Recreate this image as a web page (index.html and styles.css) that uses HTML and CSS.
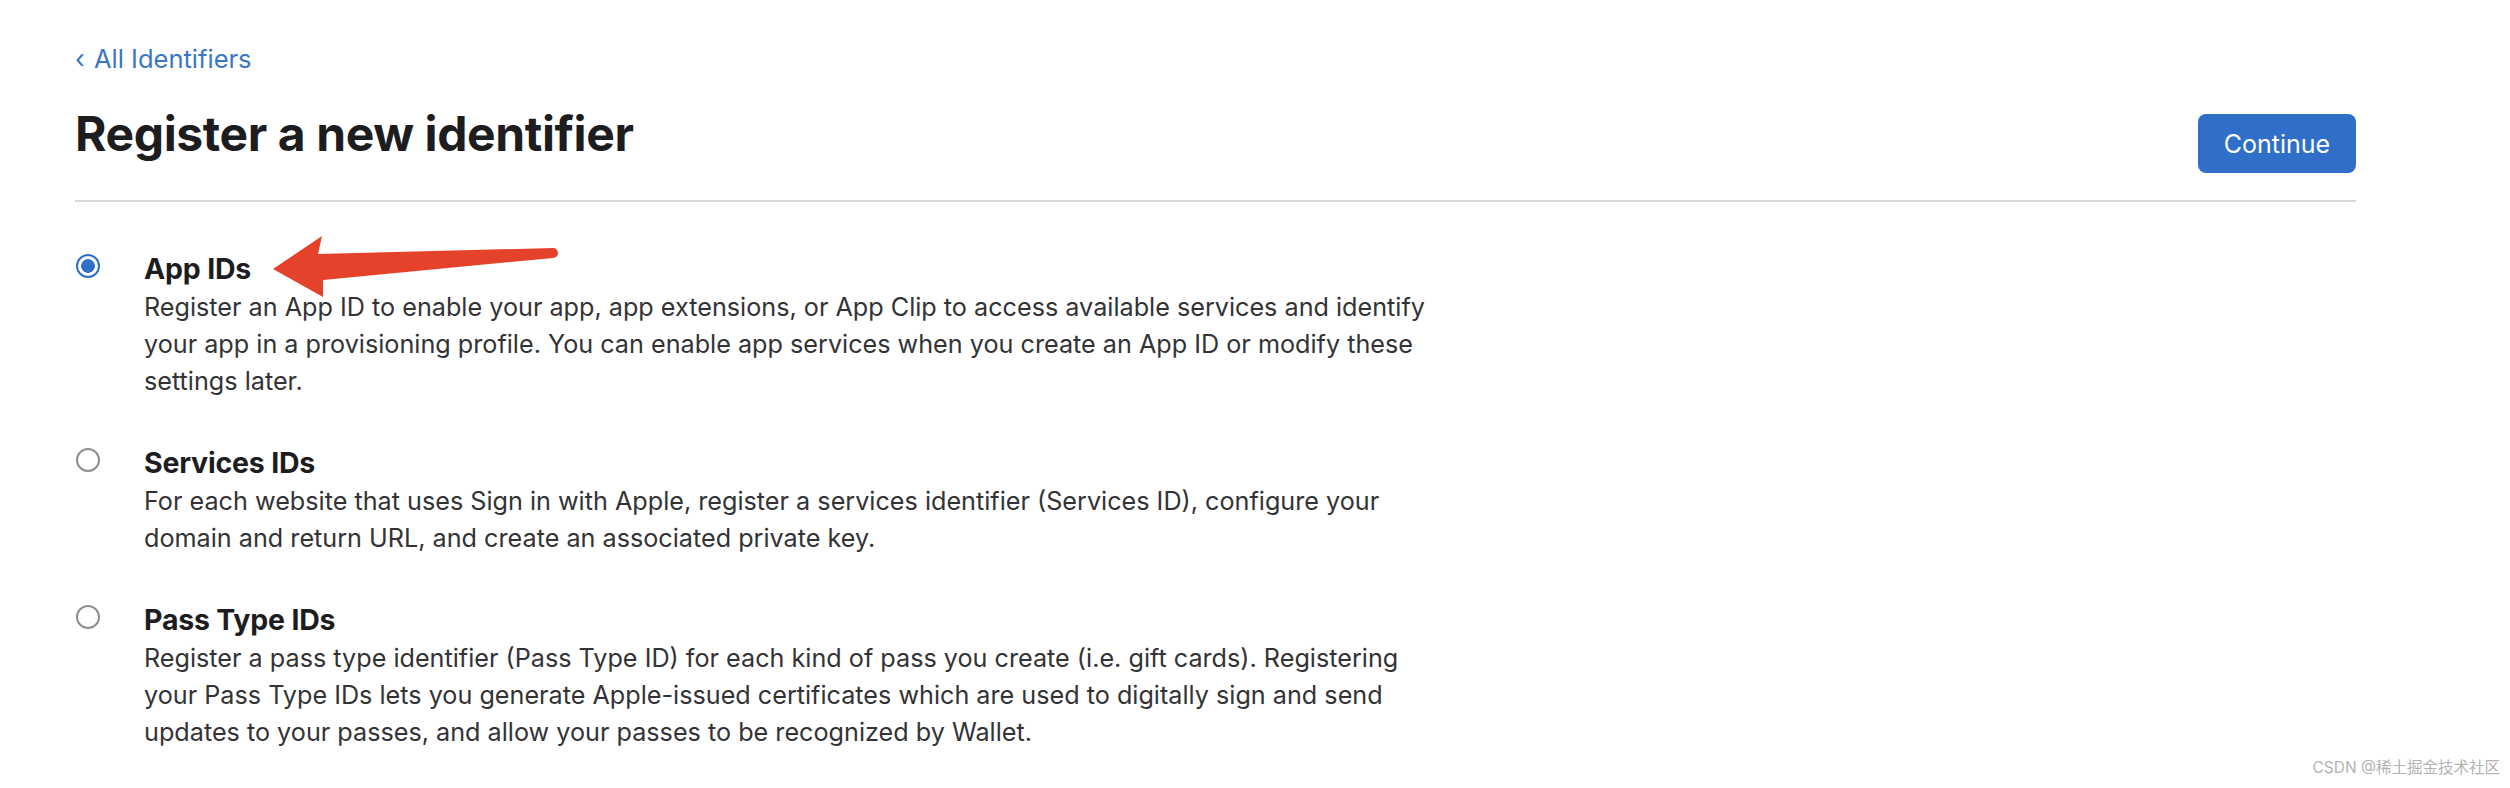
FILE: index.html
```html
<!DOCTYPE html>
<html lang="en">
<head>
<meta charset="utf-8">
<title>Register a new identifier</title>
<link rel="stylesheet" href="styles.css">
</head>
<body>
<div class="page">
  <a class="back" href="#"><span class="chev">‹</span> All Identifiers</a>
  <div class="header">
    <h1 class="title">Register a new identifier</h1>
    <button class="btn" type="button">Continue</button>
  </div>
  <div class="divider"></div>
  <div class="list">
    <div class="item">
      <span class="radio radio-on"></span>
      <div class="content">
        <div class="item-title">App IDs</div>
        <div class="desc">Register an App ID to enable your app, app extensions, or App Clip to access available services and identify your app in a provisioning profile. You can enable app services when you create an App ID or modify these settings later.</div>
      </div>
    </div>
    <div class="item">
      <span class="radio"></span>
      <div class="content">
        <div class="item-title">Services IDs</div>
        <div class="desc">For each website that uses Sign in with Apple, register a services identifier (Services ID), configure your domain and return URL, and create an associated private key.</div>
      </div>
    </div>
    <div class="item">
      <span class="radio"></span>
      <div class="content">
        <div class="item-title">Pass Type IDs</div>
        <div class="desc">Register a pass type identifier (Pass Type ID) for each kind of pass you create (i.e. gift cards). Registering your Pass Type IDs lets you generate Apple-issued certificates which are used to digitally sign and send updates to your passes, and allow your passes to be recognized by Wallet.</div>
      </div>
    </div>
  </div>
</div>
<svg class="arrow" viewBox="0 0 295 72" width="295" height="72">
  <path d="M8 39 L57 6 L53 24 L288 18 A5 5 0 0 1 288 28 L58 50 L58 67 Z" fill="#e5422c"/>
</svg>
<div class="watermark">CSDN @稀土掘金技术社区</div>
</body>
</html>
```

FILE: styles.css
```css
html, body {
  margin: 0;
  padding: 0;
  background: #ffffff;
}
body {
  position: relative;
  width: 2510px;
  height: 788px;
  overflow: hidden;
  font-family: Inter, "Liberation Sans", "Noto Sans CJK SC", sans-serif;
  color: #333336;
}
.page {
  margin-left: 75px;
  width: 2281px;
  padding-top: 44px;
}
.back {
  display: block;
  font-size: 25.5px;
  line-height: 30px;
  color: #3a77c4;
  text-decoration: none;
}
.chev {
  display: inline-block;
  margin-right: 2px;
}
.header {
  display: flex;
  justify-content: space-between;
  align-items: flex-start;
  margin-top: 30px;
}
.title {
  margin: 0;
  font-size: 48px;
  line-height: 60px;
  font-weight: 700;
  color: #1d1d1f;
  letter-spacing: -0.4px;
}
.btn {
  margin-top: 10px;
  height: 59px;
  width: 158px;
  border: none;
  border-radius: 8px;
  background: #2f6fc8;
  color: #ffffff;
  font-family: Inter, "Liberation Sans", sans-serif;
  font-size: 25px;
  font-weight: 400;
  padding: 0;
}
.divider {
  margin-top: 27px;
  height: 2px;
  background: #d8d8d8;
}
.list {
  padding-top: 48px;
  display: flex;
  flex-direction: column;
  gap: 44px;
}
.item {
  display: flex;
  align-items: flex-start;
}
.radio {
  flex: none;
  box-sizing: border-box;
  width: 24px;
  height: 24px;
  margin-left: 1px;
  margin-top: 4px;
  border-radius: 50%;
  border: 2px solid #8e8e8e;
  background: #ffffff;
}
.radio-on {
  border-color: #2f6fc8;
  background: radial-gradient(circle, #2f6fc8 0 6.5px, #ffffff 7.1px);
}
.content {
  margin-left: 44px;
  width: 1300px;
}
.item-title {
  font-size: 28.5px;
  line-height: 37px;
  font-weight: 700;
  color: #1d1d1f;
  letter-spacing: -0.2px;
}
.desc {
  margin-top: 2px;
  font-size: 25.2px;
  line-height: 37px;
  color: #333336;
}
.arrow {
  position: absolute;
  left: 265px;
  top: 230px;
}
.watermark {
  position: absolute;
  right: 10px;
  top: 756px;
  font-size: 15.5px;
  line-height: 24px;
  color: #b3b3b3;
  white-space: nowrap;
}
```
